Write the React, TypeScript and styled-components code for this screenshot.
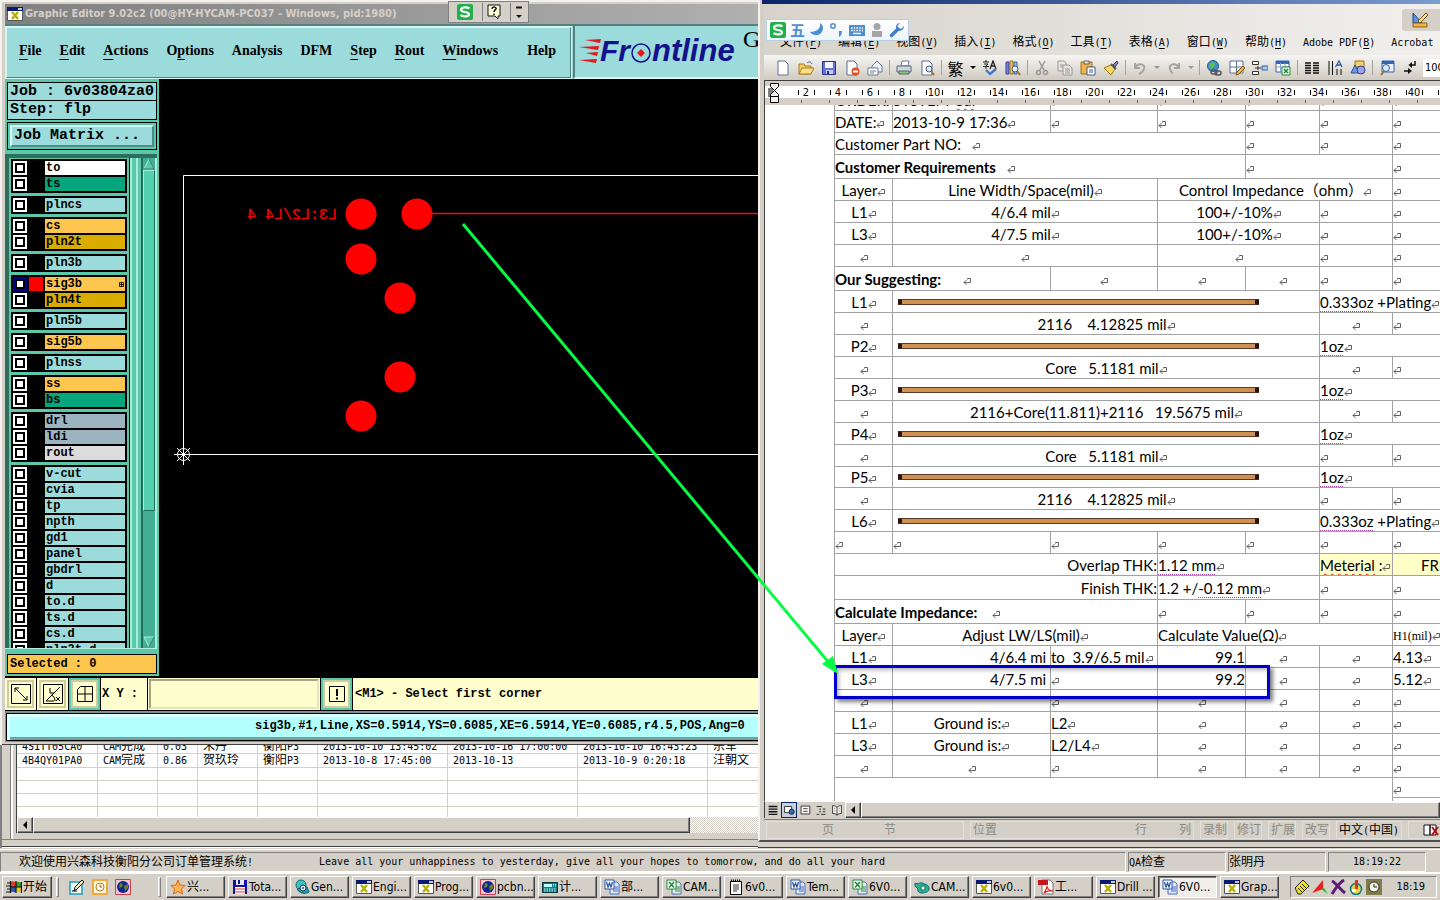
import React, { ReactNode } from "react";
import styled, { createGlobalStyle, css } from "styled-components";

const GREY = "#d4d0c8";
const AQUA = "#9bdbdb";
const MINT = "#5cc8ab";
const CREAM = "#fffecd";
const ORANGE = "#fdc64f";
const UI = `"DejaVu Sans Condensed", "Noto Sans CJK SC", sans-serif`;
const SONG = `"DejaVu Sans Mono", "Noto Sans CJK SC", monospace`;
const COURIER = `"Liberation Mono", monospace`;
const DOC = `Lato, "Noto Sans CJK SC", sans-serif`;

const Global = createGlobalStyle`
  *, *::before, *::after { box-sizing: border-box; }
  body { margin: 0; overflow: hidden; background: ${GREY}; }
  button, input { font: inherit; color: inherit; margin: 0; padding: 0; border: 0; border-radius: 0; background: none; }
  svg { display: block; flex: none; }
`;

const raised = css`
  border: 1px solid;
  border-color: #fff #404040 #404040 #fff;
  box-shadow: inset -1px -1px 0 #808080;
`;
const sunken = css`
  border: 1px solid;
  border-color: #808080 #fff #fff #808080;
`;

/* ---------- shared text ---------- */

const SongText = styled.span`
  font: 10px/14px ${SONG};
  white-space: pre;
  u {
    text-underline-offset: 2px;
    text-decoration-skip-ink: none;
  }
`;
const Han = styled.span`
  font-size: 12px;
`;

/* Underlines the access key written in brackets, as in "File(F)". */
function withKey(text: string): ReactNode {
  const hit = text.match(/^(.*\()(\w)(\))$/);
  return hit ? <>{hit[1]}<u>{hit[2]}</u>{hit[3]}</> : text;
}

function Song({ children, keyed }: { children: string; keyed?: boolean }) {
  return (
    <SongText>
      {children
        .split(/([\u3000-\uffff]+)/)
        .map((part, i) => (i % 2 ? <Han key={i}>{part}</Han> : <span key={i}>{keyed ? withKey(part) : part}</span>))}
    </SongText>
  );
}

/* ---------- icons ---------- */

function Icon({ name }: { name: string }) {
  return (
    <svg width="16" height="16" viewBox="0 0 16 16" aria-hidden="true">
      {icons[name]}
    </svg>
  );
}

const page = <path d="M3 1h7l3 3v11H3z" fill="#fff" stroke="#5a6f9c" />;
const icons: Record<string, ReactNode> = {
  x: (
    <>
      <path d="M.5 1.5h15v13H.5z" fill="#fff" stroke="#555" />
      <path d="M0 1h16v4H0z" fill="#0a1a70" />
      <path d="M11 2h4v2h-4z" fill="#c8c8c8" />
      <path d="M5 6l6 7M11 6l-6 7" stroke="#b8b000" strokeWidth="2.4" />
    </>
  ),
  star: <path d="M8 1l2 5 5 .5-3.500 3.500 1 5L8 12.500 3.500 15l1-5L1 6.500 6 6z" fill="#ffb054" stroke="#d96c10" />,
  floppy: (
    <>
      <path d="M1 1h14v14H1z" fill="#1212a0" />
      <path d="M4 1h8v5H4z" fill="#e8e8ff" />
      <path d="M6 1h2v4H6z" fill="#1212a0" />
      <path d="M3 8h10v7H3z" fill="#fff" />
      <path d="M3 10h10M3 13h10" stroke="#e03030" />
    </>
  ),
  gear: (
    <>
      <circle cx="7" cy="6" r="5" fill="#3ec3bf" stroke="#0b6f78" />
      <path d="M3 10c2 4 8 6 12 3l-2-5z" fill="#25a09b" stroke="#0a6a66" />
      <circle cx="9" cy="9" r="3" fill="#e6fff8" stroke="#128" />
      <circle cx="9" cy="9" r="1" fill="#00704a" />
    </>
  ),
  globe: (
    <>
      <path d="M.5.5h15v15H.500z" fill="#f3c9cf" stroke="#d33c4a" />
      <circle cx="8" cy="8" r="6" fill="#10288e" />
      <path d="M5 4l3 1-1 3-3 1zM9 7l4-2v4l-3 3z" fill="#6e7f2c" />
    </>
  ),
  calc: (
    <>
      <path d="M.5 3.500h15v10H.5z" fill="#087c88" stroke="#033" />
      <path d="M2 5h8v3H2z" fill="#bff" />
      <path d="M2 10h12M2 12h12M11.500 5v3M13.500 5v3" stroke="#dff" strokeDasharray="1.500 1" />
    </>
  ),
  word: (
    <>
      <path d="M6 3h7l2 2v10H6z" fill="#dfe9fb" stroke="#4a6fb5" />
      <path d="M9 8h5M9 10h5M9 12h5" stroke="#4a6fb5" />
      <path d="M1 1h9v9H1z" fill="#fff" stroke="#2a55a8" />
      <path d="M2.500 3l1.500 5 1.500-4L7 8l1.500-5" fill="none" stroke="#2a55a8" strokeWidth="1.300" />
    </>
  ),
  excel: (
    <>
      <path d="M6 3h7l2 2v10H6z" fill="#dff0df" stroke="#4a6fb5" />
      <path d="M9 8h5M9 10h5M9 12h5" stroke="#3f8a4a" />
      <path d="M1 1h9v9H1z" fill="#fff" stroke="#22863a" />
      <path d="M3 3l5 5.500M8 3L3 8.500" stroke="#1f8a36" strokeWidth="1.600" />
    </>
  ),
  note: (
    <>
      <path d="M2.500 2.500h11v13h-11z" fill="#fff" stroke="#000" />
      <path d="M3 1.500h10" stroke="#000" strokeWidth="2" strokeDasharray="1 1" />
      <path d="M5 6h6M5 8h6M5 10h6M5 12h4" stroke="#333" />
    </>
  ),
  pdf: (
    <>
      <path d="M4 1h8l3 3v11H4z" fill="#fff" stroke="#777" />
      <path d="M0 1h10v5H0z" fill="#c8161d" />
      <path d="M6 14c2-3 3-5 3-7 0 3 3 5 6 5-3-1-6 0-9 2z" fill="none" stroke="#d22" strokeWidth="1.200" />
    </>
  ),
  cam: (
    <>
      <path d="M1 4c3 2 6-2 9 1 3 0 5 2 5 5s-4 4-7 4-5-2-4-4L1 7z" fill="#2bae9f" stroke="#0a6f68" />
      <circle cx="9" cy="9" r="2.200" fill="#ffe" stroke="#063" />
    </>
  ),
  pencil: (
    <>
      <path d="M1 3h12v12H1z" fill="#f4fbff" stroke="#18a0b8" strokeWidth="1.500" />
      <path d="M5 12l1-4 7-7 2 2-7 7z" fill="#ffe9b0" stroke="#111" />
      <path d="M3 12h5" stroke="#000" />
    </>
  ),
  clock: (
    <>
      <path d="M0 0h16v16H0z" fill="#f0a93c" />
      <path d="M2 2h12v12H2z" fill="#fff5dc" />
      <circle cx="8" cy="8" r="4" fill="#fff" stroke="#c97a10" />
      <path d="M8 5.500V8h2" fill="none" stroke="#a05a00" />
    </>
  ),
  flag: (
    <>
      <path d="M5 3c2-2 4 1 5-.5V8C9 9 7 7 5 8z" fill="#e23b1c" />
      <path d="M10 3c2-1 3 1 5 0v5c-2 1-3-1-5 0z" fill="#2f9e2f" />
      <path d="M5 8c2-1 4 1 5 0v5c-1 1-3-1-5 0z" fill="#2353c4" />
      <path d="M10 8c2-1 3 1 5 0v5c-2 1-3-1-5 0z" fill="#f0c419" />
      <path d="M1 4h3M0 7h4M1 10h3M0 13h4M4.500 2v12M10 2v12M15.500 3v11M5 8h10" stroke="#111" strokeWidth="1.200" />
    </>
  ),
  newDoc: page,
  open: (
    <>
      <path d="M1 14V4h5l1 2h6v8z" fill="#f4cf67" stroke="#a87b1c" />
      <path d="M1 14l3-6h12l-3 6z" fill="#ffe08a" stroke="#a87b1c" />
      <path d="M9 3c2-2 4-1 5 1" fill="none" stroke="#355a9c" />
    </>
  ),
  save: (
    <>
      <path d="M1.500 1.500h13v13h-13z" fill="#6a73d8" stroke="#2c318c" />
      <path d="M4 2h8v6H4z" fill="#f4f6ff" />
      <path d="M5 10h7v4H5z" fill="#c6cbe8" />
      <path d="M6 11h2v3H6z" fill="#2c318c" />
    </>
  ),
  permission: (
    <>
      {page}
      <circle cx="11.500" cy="11.500" r="4" fill="#e0502a" />
      <path d="M9 11.500h5" stroke="#fff" strokeWidth="2" />
    </>
  ),
  mail: (
    <>
      <path d="M5 6l5-5 5 5v6H5z" fill="#eef2fa" stroke="#6a7894" />
      <path d="M1 8h10v7H1z" fill="#fff" stroke="#6a7894" />
      <path d="M3 11h6M3 13h4" stroke="#6a7894" />
    </>
  ),
  print: (
    <>
      <path d="M5 6l1-5h7l-1 5z" fill="#fff" stroke="#6a7894" />
      <path d="M1 6h14v6H1z" fill="#cfd6de" stroke="#56657c" />
      <path d="M3 11h10v3H3z" fill="#7fc97a" stroke="#56657c" />
    </>
  ),
  preview: (
    <>
      {page}
      <circle cx="10" cy="9" r="3" fill="#d4ecff" stroke="#4b5c80" />
      <path d="M12 11l3 4" stroke="#a66f2c" strokeWidth="2" />
    </>
  ),
  spell: (
    <>
      <path d="M1 2h6M4 0v2M2 4h4L4 6v3M1 6.500h6" fill="none" stroke="#222" />
      <path d="M8 9l3-8 3 8M9 6h4" fill="none" stroke="#222" strokeWidth="1.300" />
      <path d="M4 10l4 4 6-5" fill="none" stroke="#3a78d0" strokeWidth="2.400" />
    </>
  ),
  research: (
    <>
      <path d="M1 2h3v12H1z" fill="#7a7fd8" stroke="#3b3f96" />
      <path d="M5 1h3v13H5z" fill="#f0c45a" stroke="#96722a" />
      <path d="M9 2h3v12H9z" fill="#8fc0ee" stroke="#3b6696" />
      <circle cx="10" cy="9" r="3" fill="#e4f4ff" stroke="#4b5c80" />
      <path d="M12 11l3 4" stroke="#a66f2c" strokeWidth="2" />
    </>
  ),
  cut: (
    <>
      <path d="M5 1l5 9M11 1L6 10" stroke="#999" strokeWidth="1.500" />
      <circle cx="4.500" cy="12.500" r="2" fill="none" stroke="#999" strokeWidth="1.500" />
      <circle cx="11.500" cy="12.500" r="2" fill="none" stroke="#999" strokeWidth="1.500" />
    </>
  ),
  copy: (
    <>
      <path d="M1 1h6l2 2v8H1z" fill="#e8e6e0" stroke="#999" />
      <path d="M6 5h6l3 3v7H6z" fill="#e8e6e0" stroke="#999" />
      <path d="M8 9h5M8 11h5M8 13h5M3 5h3M3 7h3" stroke="#999" />
    </>
  ),
  paste: (
    <>
      <path d="M1 2h11v12H1z" fill="#f0b440" stroke="#96722a" />
      <path d="M4 1h5v3H4z" fill="#ddd" stroke="#666" />
      <path d="M7 7h8v8H7z" fill="#fff" stroke="#3b5a96" />
      <path d="M9 10h4M9 12h4" stroke="#3b5a96" />
    </>
  ),
  brush: (
    <>
      <path d="M10 5l4-4 1 2-3 4z" fill="#7a7fd8" stroke="#444" />
      <path d="M1 8l7-3 4 4-4 6z" fill="#f8d866" stroke="#a87b1c" />
      <path d="M8 4l5 5" stroke="#555" strokeWidth="2" />
    </>
  ),
  undo: <path d="M3 3v5h5M3 8c3-6 11-4 9 1-1 3-3 4-5 5" fill="none" stroke="#a5a39d" strokeWidth="2" />,
  redo: <path d="M13 3v5H8M13 8C10 2 2 4 4 9c1 3 2 4 3 4" fill="none" stroke="#a5a39d" strokeWidth="2" />,
  link: (
    <>
      <circle cx="7" cy="6" r="5.500" fill="#3f8fd0" stroke="#235a8c" />
      <path d="M4 3l4-1 1 3-3 4-3-2z" fill="#5fbf4f" />
      <rect x="5" y="10" width="6" height="4" rx="2" fill="none" stroke="#556" strokeWidth="1.500" />
      <rect x="9" y="11" width="6" height="4" rx="2" fill="none" stroke="#556" strokeWidth="1.500" />
    </>
  ),
  tables: (
    <>
      <path d="M1 1h13v12H1z" fill="#fff" stroke="#5a6f9c" />
      <path d="M1 7h13M7.500 1v12" stroke="#5a6f9c" />
      <path d="M7 15l1-3 6-6 2 2-6 6z" fill="#f0b440" stroke="#7a5a1c" />
    </>
  ),
  insertTable: (
    <>
      <path d="M.5 1.500h6v3h-6zM.5 11.500h6v3h-6z" fill="#fff" stroke="#333" />
      <path d="M10 6h6v4h-6z" fill="#a7cbf2" stroke="#2d62a8" />
      <path d="M3 8h6M6 6v4" stroke="#333" />
    </>
  ),
  sheet: (
    <>
      <path d="M1 1h13v11H1z" fill="#fff" stroke="#3565b0" />
      <path d="M1 2.500h13" stroke="#3565b0" strokeWidth="3" />
      <path d="M1 7h13M5.500 3v9M10 3v9" stroke="#7f9fd0" />
      <path d="M7 7h8v8H7z" fill="#eaffea" stroke="#22863a" />
      <path d="M9 9l4 4M13 9l-4 4" stroke="#22863a" strokeWidth="1.500" />
    </>
  ),
  columns: <path d="M1 3h6M1 5.500h6M1 8h6M1 10.500h6M1 13h6M9 3h6M9 5.500h6M9 8h6M9 10.500h6M9 13h6" stroke="#111" strokeWidth="1.400" />,
  direction: (
    <>
      <path d="M2 1v14M5.500 1v14M10 9v6M14 9v6" stroke="#111" />
      <path d="M8.500 7L12 1l3 6M10 5h4" fill="none" stroke="#2d62a8" strokeWidth="1.300" />
    </>
  ),
  drawing: (
    <>
      <path d="M5 1h9v6H5z" fill="#f5cf62" stroke="#93701f" />
      <path d="M1 13l4-8 4 8z" fill="#6d9be8" stroke="#274f9c" />
      <circle cx="11" cy="10" r="4" fill="#9aa2e6" stroke="#3b3f96" />
    </>
  ),
  map: (
    <>
      <path d="M3 1h12v11H3z" fill="#eaf3ff" stroke="#3565b0" />
      <path d="M3 2.500h12" stroke="#3565b0" strokeWidth="3" />
      <circle cx="7" cy="8" r="3.500" fill="#d4ecff" stroke="#4b5c80" />
      <path d="M5 11l-3 4" stroke="#a66f2c" strokeWidth="2" />
    </>
  ),
  marks: (
    <>
      <path d="M13 1v4H9M2 11h6" fill="none" stroke="#111" strokeWidth="1.500" />
      <path d="M10 2v6L6.500 5zM6 8v6l4-3z" fill="#111" />
    </>
  ),
  ruler: (
    <>
      <path d="M1 11V1l9 10z" fill="#5b94e0" stroke="#1d3f86" />
      <path d="M1 11h14v4H1z" fill="#f0b440" stroke="#8a641a" />
      <path d="M6 9l8-8 2 2-8 8z" fill="#ffe28a" stroke="#66511c" />
    </>
  ),
  lines: <path d="M3 4h10M3 7h10M3 10h10M3 13h10" stroke="#111" strokeWidth="1.500" />,
  web: (
    <>
      <path d="M3 4h8v7H3z" fill="#fff" stroke="#222" />
      <circle cx="11" cy="10" r="3" fill="#3565b0" stroke="#222" />
    </>
  ),
  printView: (
    <>
      <path d="M3.500 3.500h10v9h-10z" fill="#fff" stroke="#222" />
      <path d="M6 6.500h5M6 9.500h5" stroke="#222" />
    </>
  ),
  outline: <path d="M3 4h6M6 7h2M10 7h3M6 10h2M10 10h3M3 13h3M8 13h5" stroke="#222" />,
  reading: <path d="M8 5v9M8 5C6 3 4 3 3 3v9c2 0 4 0 5 2 1-2 3-2 5-2V3c-1 0-3 0-5 2zM5 6h1M5 9h1M10 6h1M10 9h1" fill="#fff" stroke="#222" />,
  book: (
    <>
      <path d="M1 3h6v10H1zM7 3h6v10H7z" fill="#fff" stroke="#111" />
      <path d="M9 5l6 8M15 5l-6 8" stroke="#b01010" strokeWidth="2" />
    </>
  ),
  sogou: (
    <>
      <rect x="0" y="0" width="16" height="16" rx="2" fill="#22b04a" />
      <path d="M12.500 4.500C10 2.500 4 3 4 6c0 2.500 8 1.500 8 4.200 0 2.800-6 2.800-8.500 1" fill="none" stroke="#fff" strokeWidth="2.200" />
    </>
  ),
  help: (
    <>
      <path d="M2 1h12v11h-2v3l-3-3H2z" fill="#ffffdc" stroke="#111" />
      <path d="M6 5c0-3 5-2 4 0-.5 1-2 1-2 3M8 9.500V11" fill="none" stroke="#111" strokeWidth="1.500" />
    </>
  ),
  drop: (
    <>
      <path d="M5 3.500h6" stroke="#111" strokeWidth="2" />
      <path d="M5 11h6l-3 3z" fill="#111" />
    </>
  ),
  moon: <path d="M11 1c1 5-3 9-10 9 5 6 13 3 13-4 0-2-1-4-3-5z" fill="#4f8fd0" />,
  punct: (
    <>
      <circle cx="4" cy="4" r="2.200" fill="none" stroke="#4f8fd0" strokeWidth="1.500" />
      <path d="M10 9h3c0 3-1 5-3 6z" fill="#4f8fd0" />
    </>
  ),
  keyboard: (
    <>
      <path d="M0 3h16v11H0z" fill="#4f8fd0" />
      <path d="M2 6h12M2 8.500h12" stroke="#fff" strokeWidth="1.400" strokeDasharray="1.500 1.200" />
      <path d="M4 11.500h8" stroke="#fff" strokeWidth="1.400" />
    </>
  ),
  person: (
    <>
      <circle cx="8" cy="4.500" r="3.500" fill="#a5a5a5" />
      <path d="M3 9h10v6H3z" fill="#a5a5a5" />
    </>
  ),
  wrench: (
    <>
      <path d="M2.500 13.500L9 7" stroke="#3f7fc8" strokeWidth="3.500" strokeLinecap="round" />
      <path d="M11 1C7 1 6 5 8 8c3 2 7 0 7-4l-3 3-3-1-.5-2.500z" fill="#3f7fc8" />
    </>
  ),
  tag: (
    <>
      <path d="M1 9l8-8 6 6-8 8H4z" fill="#f2e21c" stroke="#222" />
      <path d="M4 9l4 4M6 7l4 4M8 5l4 4" stroke="#222" />
    </>
  ),
  sail: (
    <>
      <path d="M0 14L11 1v9z" fill="#ee1c1c" />
      <path d="M9 10l3-1 4 6z" fill="#1fb83a" />
    </>
  ),
  cross: <path d="M2 2c4 2 8 8 13 12M14 1C9 4 5 10 2 15" stroke="#5c1a7a" strokeWidth="3" fill="none" />,
  flask: (
    <>
      <circle cx="8" cy="10" r="5.500" fill="#e6d54a" stroke="#0b7c86" strokeWidth="1.500" />
      <path d="M7 1h3v9H7z" fill="#d8362a" />
      <path d="M4 10h4v3H4z" fill="#fff" />
    </>
  ),
  timer: (
    <>
      <path d="M0 0h16v16H0z" fill="#7f7d4a" />
      <circle cx="8" cy="8" r="5" fill="#f4f4e4" stroke="#333" />
      <path d="M8 5v3h3" fill="none" stroke="#222" />
    </>
  ),
};

/* ---------- desktop ---------- */

const Desktop = styled.div`
  position: relative;
  display: flex;
  flex-direction: column;
  height: 100vh;
  background: ${GREY};
  overflow: hidden;
  color: #000;
`;
const Windows = styled.main`
  flex: 1;
  min-height: 0;
  display: grid;
  grid-template-columns: minmax(0, 758fr) minmax(0, 682fr);
`;
const LeftSide = styled.div`
  display: flex;
  flex-direction: column;
  min-height: 0;
`;

/* ---------- graphic editor ---------- */

const Editor = styled.section`
  position: relative;
  flex: 1;
  min-height: 0;
  display: flex;
  flex-direction: column;
  padding: 4px 0 3px 5px;
  background: ${GREY};
  box-shadow: inset 2px 2px 0 #f4f2ee, inset 0 -1px 0 #404040;
  overflow: hidden;
`;
const TitleBar = styled.header`
  flex: none;
  height: 20px;
  display: flex;
  align-items: center;
  gap: 2px;
  padding-left: 2px;
  background: linear-gradient(90deg, #808080, #b0b0b0);
  color: ${GREY};
  font: bold 11px/18px ${UI};
  white-space: nowrap;
`;
const MiniBar = styled.div`
  position: absolute;
  top: 1px;
  left: 448px;
  display: flex;
  align-items: center;
  height: 22px;
  padding-left: 5px;
  background: ${GREY};
  border: 1px solid #808080;
`;
const MiniButton = styled.button`
  width: 28px;
  height: 18px;
  padding-left: 3px;
  & + & {
    border-left: 1px solid #808080;
  }
  &:last-child {
    width: 18px;
    padding-left: 0;
  }
`;
const MenuStrip = styled.div`
  flex: none;
  display: flex;
  height: 55px;
  border-top: 2px solid #54807f;
  background: ${AQUA};
`;
const EditorMenu = styled.nav`
  flex: none;
  width: 567px;
  display: flex;
  align-items: center;
  gap: 18px;
  padding: 0 14px 4px 12px;
  border: 2px solid;
  border-color: #d8f5f5 #54807f #54807f #d8f5f5;
  outline: 1px solid #d8f5f5;
  outline-offset: -1px;
  font: bold 14px/20px "Liberation Serif", serif;
`;
const MenuItem = styled.button<{ $end?: boolean }>`
  margin-left: ${(p) => (p.$end ? "auto" : 0)};
  u {
    text-underline-offset: 4px;
    text-decoration-skip-ink: none;
  }
`;
const Brand = styled.div`
  flex: 1;
  display: flex;
  gap: 2px;
  margin-left: 1px;
  padding: 12px 0 0 4px;
  border-left: 2px solid #54807f;
  border-bottom: 2px solid #d8f5f5;
  overflow: hidden;
  font: 24px/26px "Liberation Serif", serif;
`;
const Product = styled.span`
  margin-top: -12px;
`;

const Body = styled.div`
  flex: 1;
  min-height: 0;
  display: flex;
  background: #000;
`;
const Side = styled.aside`
  width: 154px;
  flex: none;
  display: flex;
  flex-direction: column;
  padding: 3px 2px 2px;
  background: ${MINT};
`;
const JobLine = styled.div`
  height: 19px;
  padding-left: 2px;
  border: 1px solid #000;
  background: ${AQUA};
  font: bold 15px/17px ${COURIER};
  white-space: pre;
  & + & {
    border-top: 0;
  }
`;
const MatrixFrame = styled.div`
  margin-top: 2px;
  padding: 2px;
  border: 1px solid #000;
`;
const MatrixButton = styled.button`
  display: block;
  width: 100%;
  height: 22px;
  padding-left: 2px;
  text-align: left;
  background: ${AQUA};
  border: 2px solid;
  border-color: #d0fbf4 #4d8d88 #4d8d88 #d0fbf4;
  font: bold 15px/18px ${COURIER};
`;
const LayerArea = styled.div`
  flex: 1;
  min-height: 0;
  display: flex;
  margin: 4px 0 5px -2px;
  border-top: 4px solid #2e6e5c;
  border-bottom: 1px solid #b4f0dc;
`;
const LayerList = styled.div`
  width: 128px;
  border-left: 4px solid #2e6e5c;
  border-right: 1px solid #000;
  padding: 1px 2px 0 2px;
  overflow: hidden;
`;
const LayerGroup = styled.div`
  display: flex;
  flex-direction: column;
  gap: 2px;
  padding: 2px;
  margin-bottom: 3px;
  background: #000;
`;
const LayerRow = styled.label`
  display: flex;
  gap: 2px;
  height: 14px;
`;
const LayerTick = styled.input<{ $on?: boolean }>`
  appearance: none;
  width: 14px;
  height: 14px;
  background: #fff;
  box-shadow: inset 0 0 0 2px ${(p) => (p.$on ? "#000090" : "#fff")}, inset 0 0 0 4px #000;
`;
const Swatch = styled.span<{ $on?: boolean }>`
  width: 14px;
  background: ${(p) => (p.$on ? "#f00" : "#000")};
`;
const LayerName = styled.span<{ $tone: string }>`
  flex: 1;
  display: flex;
  align-items: center;
  justify-content: space-between;
  padding: 0 1px 0 1px;
  background: ${(p) => p.$tone};
  font: bold 12px/14px ${COURIER};
`;
const Rail = styled.div`
  width: 8px;
  background: ${MINT};
  border-left: 2px solid #a6efd9;
  border-right: 2px solid #a6efd9;
`;
const LayerScroll = styled.div`
  width: 16px;
  margin-left: 3px;
  display: flex;
  flex-direction: column;
  border-left: 2px solid #1f6e5a;
  border-right: 2px solid #a6efd9;
  background: #44ae96;
`;
const LayerThumb = styled.div`
  flex: 0 0 341px;
  border: 1px solid;
  border-color: #a6efd9 #1f6e5a #1f6e5a #a6efd9;
  background: #54d0b0;
`;
const Spacer = styled.div`
  flex: 1;
`;
const Selected = styled.div`
  height: 20px;
  padding-left: 2px;
  border: 1px solid #000;
  background: ${ORANGE};
  font: bold 12px/18px ${COURIER};
`;
const Canvas = styled.svg`
  flex: 1;
  min-width: 0;
  height: 100%;
  margin-left: 1px;
  background: #000;
`;
const CommandBar = styled.div`
  flex: none;
  height: 35px;
  display: flex;
  align-items: stretch;
  gap: 1px;
  padding: 2px 0 1px;
  background: #000;
  font: bold 12px/16px ${COURIER};
`;
const ToolButton = styled.button<{ $on?: boolean }>`
  width: 31px;
  display: grid;
  place-items: center;
  background: ${CREAM};
  border: 2px solid ${(p) => (p.$on ? MINT : CREAM)};
  box-shadow: inset 0 0 0 2px #cfcba0;
`;
const XYLabel = styled.label`
  width: 46px;
  padding-left: 1px;
  background: ${CREAM};
  line-height: 32px;
  white-space: pre;
`;
const XYInput = styled.input`
  width: 172px;
  padding-left: 4px;
  background: ${CREAM};
  border: 3px solid #cfcba0;
  border-color: #a8a488 #e8e4c0 #e8e4c0 #a8a488;
  outline: 1px solid ${CREAM};
  outline-offset: -1px;
`;
const Prompt = styled.div`
  flex: 1;
  padding-left: 2px;
  background: ${CREAM};
  line-height: 32px;
  white-space: nowrap;
`;
const InfoBar = styled.div`
  flex: none;
  height: 31px;
  padding: 2px 0 0 1px;
  background: #7a9494;
`;
const InfoText = styled.div`
  height: 28px;
  padding-left: 248px;
  border: 1px solid #000;
  border-right: 0;
  background: #b3fffd;
  box-shadow: inset 3px 3px 0 #dcffff, inset 0 -3px 0 #6fa4a4;
  font: bold 12px/25px ${COURIER};
  white-space: nowrap;
  overflow: hidden;
`;

const blue = AQUA;
const gold = "#dbac00";
const green = "#05a67c";
const steel = "#9bb4c0";
const layerGroups: [string, string][][] = [
  [["to", "#fff"], ["ts", green]],
  [["plncs", blue]],
  [["cs", ORANGE], ["pln2t", gold]],
  [["pln3b", blue]],
  [["sig3b", ORANGE], ["pln4t", gold]],
  [["pln5b", blue]],
  [["sig5b", ORANGE]],
  [["plnss", blue]],
  [["ss", ORANGE], ["bs", green]],
  [["drl", steel], ["ldi", steel], ["rout", "#dcdcdc"]],
  ["v-cut", "cvia", "tp", "npth", "gd1", "panel", "gbdrl", "d", "to.d", "ts.d", "cs.d", "pln2t.d"].map(
    (n) => [n, blue] as [string, string]
  ),
];

const editorMenu: [string, number][] = [
  ["File", 0], ["Edit", 0], ["Actions", 0], ["Options", 1], ["Analysis", -1],
  ["DFM", -1], ["Step", 0], ["Rout", 0], ["Windows", 0], ["Help", -1],
];

function Logo() {
  return (
    <svg width="162" height="28" viewBox="0 0 162 28" role="img" aria-label="Frontline">
      <path d="M6 2l16-1-1 4zM0 9l20-1-1 4zM7 15l12-1-1 4zM0 22l18-1-1 4z" fill="#e8161c" />
      <text x="21" y="23" fontFamily="Liberation Sans" fontWeight="bold" fontStyle="italic" fontSize="30" fill="#12128c">
        Fr
      </text>
      <circle cx="62" cy="15" r="9" fill="none" stroke="#12128c" strokeWidth="1.500" />
      <path d="M62 11l4 4-4 4-4-4z" fill="#e8161c" />
      <text x="73" y="23" fontFamily="Liberation Sans" fontWeight="bold" fontStyle="italic" fontSize="31" fill="#12128c">
        ntline
      </text>
    </svg>
  );
}

const pads = [[361, 214], [417, 214], [361, 259], [400, 298], [400, 377], [361, 416]];

function GraphicEditor() {
  return (
    <Editor>
      <TitleBar>
        <Icon name="x" />
        <span>Graphic Editor 9.02c2 (00@HY-HYCAM-PC037 - Windows, pid:1980)</span>
      </TitleBar>
      <MiniBar>
        {["sogou", "help", "drop"].map((n) => (
          <MiniButton key={n} aria-label={n}>
            <Icon name={n} />
          </MiniButton>
        ))}
      </MiniBar>
      <MenuStrip>
        <EditorMenu>
          {editorMenu.map(([label, at]) => (
            <MenuItem key={label} $end={label === "Help"}>
              {at < 0 ? label : <>{label.slice(0, at)}<u>{label[at]}</u>{label.slice(at + 1)}</>}
            </MenuItem>
          ))}
        </EditorMenu>
        <Brand>
          <Logo />
          <Product>Genesis</Product>
        </Brand>
      </MenuStrip>
      <Body>
        <Side>
          <JobLine>Job : 6v03804za0</JobLine>
          <JobLine>Step: flp</JobLine>
          <MatrixFrame>
            <MatrixButton>Job Matrix ...</MatrixButton>
          </MatrixFrame>
          <LayerArea>
            <LayerList>
              {layerGroups.map((group, i) => (
                <LayerGroup key={i}>
                  {group.map(([name, tone]) => (
                    <LayerRow key={name}>
                      <LayerTick type="checkbox" $on={name === "sig3b"} />
                      <Swatch $on={name === "sig3b"} />
                      <LayerName $tone={tone}>
                        {name}
                        {name === "sig3b" && (
                          <svg width="5" height="5" viewBox="0 0 5 5" aria-hidden="true">
                            <path d="M.5.5h4v4h-4zM2.500 0v5M0 2.500h5" fill="none" stroke="#000" strokeWidth=".8" />
                          </svg>
                        )}
                      </LayerName>
                    </LayerRow>
                  ))}
                </LayerGroup>
              ))}
            </LayerList>
            <Rail />
            <LayerScroll>
              <svg width="12" height="12" viewBox="0 0 12 12" aria-hidden="true">
                <path d="M6 1l5 10H1z" fill={MINT} stroke="#a6efd9" />
                <path d="M6 1l5 10H1" fill="none" stroke="#1f6e5a" />
              </svg>
              <LayerThumb />
              <Spacer />
              <svg width="12" height="12" viewBox="0 0 12 12" aria-hidden="true">
                <path d="M1 1h10L6 11z" fill={MINT} stroke="#a6efd9" />
                <path d="M11 1L6 11" stroke="#1f6e5a" />
              </svg>
            </LayerScroll>
          </LayerArea>
          <Selected>Selected : 0</Selected>
        </Side>
        <Canvas viewBox="160 79 598 597" preserveAspectRatio="xMinYMin slice">
          <path d="M183.500 454V175.500H1400M174 454.500H1400" fill="none" stroke="#fff" />
          <path d="M183.500 445v20M177 448l13 13M190 448l-13 13" stroke="#fff" />
          <circle cx="183.500" cy="454.500" r="6" fill="none" stroke="#fff" />
          {pads.map(([x, y]) => (
            <circle key={`${x}-${y}`} cx={x} cy={y} r="15.500" fill="#f00" />
          ))}
          <path d="M430 213.500H1400" stroke="#e81010" strokeWidth="1.600" />
          <text transform="translate(337 219) scale(-1 1)" fontFamily="Liberation Mono" fontSize="15" fill="#f00000" stroke="#f00000" strokeWidth=".4" xmlSpace="preserve">
            L3:L2/L4 4
          </text>
        </Canvas>
      </Body>
      <CommandBar>
        <ToolButton aria-label="Zoom area">
          <svg width="20" height="20" viewBox="0 0 20 20">
            <path d="M.5.5h19v19H.5zM4 4l12 12M4 8V4h4M12 16h4v-4" fill="none" stroke="#000" />
          </svg>
        </ToolButton>
        <ToolButton aria-label="Angle">
          <svg width="20" height="20" viewBox="0 0 20 20">
            <path d="M.5.5h19v19H.5zM3 17L17 3M3 17h8M7 4v5h4M8 11c3 1 4 3 4 6M13 13l4 4M17 13l-4 4" fill="none" stroke="#000" />
          </svg>
        </ToolButton>
        <ToolButton $on aria-label="Grid">
          <svg width="16" height="16" viewBox="0 0 16 16">
            <path d="M.5 3.500l3-3h12v15H.5zM.5 8h15M8 .5v15" fill="none" stroke="#000" />
          </svg>
        </ToolButton>
        <XYLabel htmlFor="xy">X Y :</XYLabel>
        <XYInput id="xy" />
        <ToolButton $on aria-label="Warnings">
          <svg width="16" height="16" viewBox="0 0 16 16">
            <path d="M.5.5h15v15H.5z" fill="none" stroke="#000" />
            <path d="M8 3v7M8 11.500v2" stroke="#000" strokeWidth="2" />
          </svg>
        </ToolButton>
        <Prompt>&lt;M1&gt; - Select first corner</Prompt>
      </CommandBar>
      <InfoBar>
        <InfoText>sig3b,#1,Line,XS=0.5914,YS=0.6085,XE=6.5914,YE=0.6085,r4.5,POS,Ang=0</InfoText>
      </InfoBar>
    </Editor>
  );
}

/* ---------- order list ---------- */

const Orders = styled.section`
  flex: none;
  height: 103px;
  padding: 0 0 0 14px;
  background: ${GREY};
  border-left: 2px solid #808080;
  box-shadow: inset 0 -1px 0 #fff, inset 0 -2px 0 #404040, inset 0 -8px 0 ${GREY}, inset 0 -9px 0 #808080,
    inset 8px 0 0 ${GREY}, inset 9px 0 0 #808080, inset 11px 0 0 #fff;
`;
const OrderView = styled.div`
  height: 72px;
  background: #fff;
  border-left: 1px solid #404040;
  overflow: hidden;
`;
const OrderTable = styled.table`
  width: 800px;
  margin: -6px 0 0 -1px;
  table-layout: fixed;
  border-collapse: collapse;
  td {
    height: 13px;
    padding: 0 0 0 5px;
    border: 1px solid #d4d0c8;
    line-height: 12px;
    overflow: hidden;
    white-space: nowrap;
  }
  ${SongText} {
    display: block;
    line-height: 12px;
  }
  ${Han} {
    line-height: 12px;
  }
`;
const OrderScroll = styled.div`
  display: flex;
  height: 16px;
  border-left: 1px solid #404040;
  background: repeating-conic-gradient(#fff 0 25%, ${GREY} 0 50%) 0 0 / 2px 2px;
`;
const ScrollButton = styled.button`
  width: 16px;
  height: 16px;
  display: grid;
  place-items: center;
  background: ${GREY};
  ${raised}
`;
const ScrollThumb = styled.div<{ $grow?: boolean }>`
  width: 657px;
  flex: ${(p) => (p.$grow ? 1 : "none")};
  height: 16px;
  background: ${GREY};
  ${raised}
`;
const ArrowLeft = () => (
  <svg width="4" height="8" viewBox="0 0 4 8" aria-hidden="true">
    <path d="M4 0v8L0 4z" />
  </svg>
);

const orderCols = [81, 60, 40, 60, 60, 130, 130, 130, 110];
const orders = [
  ["4S1TT05CA0", "CAM完成", "0.03", "朱丹", "衡阳P3", "2013-10-10 13:45:02", "2013-10-16 17:00:00", "2013-10-10 16:43:23", "宗军"],
  ["4B4QY01PA0", "CAM完成", "0.86", "贺玖玲", "衡阳P3", "2013-10-8 17:45:00", "2013-10-13", "2013-10-9 0:20:18", "汪朝文"],
  [], [], [], [],
];

function OrderList() {
  return (
    <Orders>
      <OrderView>
        <OrderTable>
          <colgroup>
            {orderCols.map((w, i) => (
              <col key={i} width={w} />
            ))}
          </colgroup>
          <tbody>
            {orders.map((row, i) => (
              <tr key={i}>
                {orderCols.map((_, c) => (
                  <td key={c}>{row[c] && <Song>{row[c]}</Song>}</td>
                ))}
              </tr>
            ))}
          </tbody>
        </OrderTable>
      </OrderView>
      <OrderScroll>
        <ScrollButton aria-label="Scroll left">
          <ArrowLeft />
        </ScrollButton>
        <ScrollThumb />
      </OrderScroll>
    </Orders>
  );
}

/* ---------- word ---------- */

const WordFrame = styled.section`
  position: relative;
  min-height: 0;
  margin-bottom: 6px;
  display: flex;
  flex-direction: column;
  padding-left: 4px;
  background: ${GREY};
  border-left: 2px solid #f4f2ee;
  border-bottom: 2px solid #505050;
  box-shadow: 0 5px 0 ${GREY}, 0 6px 0 #404040;
  overflow: hidden;
`;
const WordTitle = styled.div`
  flex: none;
  height: 4px;
  margin-left: -2px;
  background: linear-gradient(90deg, #0a246a, #7a9ccf);
`;
const WordMenu = styled.nav`
  flex: none;
  height: 51px;
  display: flex;
  align-items: flex-end;
  gap: 16px;
  padding: 0 0 5px 16px;
  background: linear-gradient(90deg, #d6d3cb, #f2f0ee);
  white-space: nowrap;
  overflow: hidden;
`;
const InputBar = styled.div`
  position: absolute;
  top: 19px;
  left: 6px;
  display: flex;
  align-items: center;
  gap: 4px;
  height: 22px;
  padding: 0 3px;
  background: linear-gradient(#fff, #eef5fc);
  border: 1px solid #b9cfe4;
  color: #4f8fd0;
  font: bold 15px/18px "Noto Sans CJK SC", sans-serif;
`;
const SideTools = styled.div`
  position: absolute;
  top: 9px;
  right: 0;
  width: 38px;
  height: 22px;
  display: flex;
  align-items: center;
  padding-left: 10px;
  border-radius: 3px 0 0 3px;
  background: ${GREY};
`;
const WordTools = styled.div`
  flex: none;
  height: 26px;
  display: flex;
  align-items: center;
  padding-left: 4px;
  background: linear-gradient(#f6f5f2, #cfcbc2);
  border-bottom: 1px solid #404040;
  overflow: hidden;
  &::before {
    content: "";
    width: 2px;
    height: 15px;
    margin-right: 3px;
    background: repeating-linear-gradient(#a09c92 0 2px, transparent 2px 4px);
  }
`;
const Tool = styled.button`
  flex: none;
  width: 23px;
  height: 22px;
  display: grid;
  place-items: center;
  font: 16px/20px "Noto Sans CJK SC", sans-serif;
`;
const Drop = styled.button<{ $dim?: boolean }>`
  flex: none;
  width: 11px;
  height: 22px;
  &::before {
    content: "";
    display: block;
    width: 5px;
    margin: 0 3px;
    border: 3px solid transparent;
    border-top-color: ${(p) => (p.$dim ? "#999" : "#000")};
    border-bottom: 0;
  }
`;
const ToolRule = styled.span`
  flex: none;
  width: 1px;
  height: 15px;
  margin: 0 2px 0 3px;
  background: #a6a398;
`;
const ZoomBox = styled.input`
  flex: none;
  width: 50px;
  height: 18px;
  margin-left: 2px;
  padding-left: 2px;
  background: #fff;
  font: 11px/16px ${UI};
`;
const Ruler = styled.div`
  flex: none;
  height: 24px;
  display: flex;
  align-items: center;
  padding: 1px 0 2px 3px;
  background: linear-gradient(90deg, #666 1px, transparent 1px) 8px 19px / 28px 3px repeat-x,
    linear-gradient(${GREY} 5px, #fff 5px 17px, ${GREY} 17px);
  border-left: 1px solid #404040;
  overflow: hidden;
`;
const RulerCell = styled.span`
  flex: none;
  width: 32px;
  display: flex;
  align-items: center;
  justify-content: center;
  font: 11px/12px "DejaVu Sans Condensed", sans-serif;
  span {
    width: 15px;
    text-align: center;
  }
  &::before,
  &::after {
    content: "";
    width: 1px;
    height: 5px;
    background: #000;
  }
`;
const Paper = styled.div`
  flex: 1;
  min-height: 0;
  padding-left: 69px;
  background: #fff;
  border-left: 1px solid #404040;
  overflow: hidden;
`;
const Sheet = styled.div`
  position: relative;
  width: 680px;
`;
const DocTable = styled.table`
  width: 660px;
  margin-top: -17px;
  table-layout: fixed;
  border-collapse: collapse;
  font: 15px/18px ${DOC};
`;
const Cell = styled.td<{ $align?: string; $fill?: boolean; $open?: boolean; $bold?: boolean }>`
  padding: 0;
  border: 1px solid #a2a2a2;
  ${(p) => p.$open && "border-bottom-color: transparent;"}
  text-align: ${(p) => p.$align || "left"};
  background: ${(p) => (p.$fill ? "#ffffc8" : "transparent")};
  font-weight: ${(p) => (p.$bold ? 700 : 400)};
  white-space: pre;
  overflow: hidden;
`;
const Row = styled.tr<{ $h: number }>`
  height: ${(p) => p.$h}px;
`;
const Copper = styled.div`
  width: 361px;
  height: 6px;
  margin-left: 5px;
  border: 1px solid #5a3a28;
  border-left: 4px solid #2a1410;
  border-right: 4px solid #2a1410;
  border-radius: 1px;
  background: #cf9050;
`;
const Hint = styled.span`
  text-decoration: underline dotted #a040a0 1px;
  text-underline-offset: 3px;
`;
const Typo = styled.span`
  text-decoration: underline wavy #d02020 1px;
  text-underline-offset: 2px;
`;
const Small = styled.span`
  font: 12px/18px "Liberation Serif", serif;
`;
const Indent = styled.span`
  padding-left: 28px;
`;
const MarkSvg = styled.svg`
  display: inline-block;
  vertical-align: -1px;
`;
const Mark = () => (
  <MarkSvg width="8" height="8" viewBox="0 0 8 8" aria-hidden="true">
    <path d="M4.500 1.500V.5h3v4H1M3.500 2L1 4.500 3.500 7" fill="none" stroke="#606060" />
  </MarkSvg>
);
const Highlight = styled.div`
  position: absolute;
  top: 577px;
  left: 0;
  width: 436px;
  height: 34px;
  border: 3px solid #0000c8;
  box-shadow: 3px 3px 4px rgba(0, 0, 0, 0.5), inset 2px 2px 4px rgba(0, 0, 0, 0.3);
`;

type C = { n?: number; a?: string; t?: ReactNode; m?: boolean; fill?: boolean; open?: boolean; bold?: boolean };
const L: C = {};
const M: C = { a: "center" };
const mid = (t: ReactNode, n = 1): C => ({ a: "center", t, n });
const left = (t: ReactNode, n = 1): C => ({ t, n });
const right = (t: ReactNode, n = 1): C => ({ a: "right", t, n, m: false });
const head = (t: string, n: number): C => ({ t, n, bold: true });
const bar: C = { n: 4, t: <Copper />, m: false };
const oz = left(<Hint>1oz</Hint>, 2);
const plating = left(<><Hint>0.333oz</Hint> +Plating</>, 2);

const docRows: [number, C[]][] = [
  [22, [left("ORDER:"), { t: <>SYSTEM <Typo>Cui</Typo></>, m: false }, L, L, L, L, L]],
  [22, [left("DATE:"), left("2013-10-9 17:36"), L, L, L, L, L]],
  [22, [left("Customer Part NO:   ", 4), L, L, L]],
  [24, [head("Customer Requirements   ", 4), { n: 2 }, L]],
  [22, [mid("Layer"), mid("Line Width/Space(mil)", 2), mid("Control Impedance（ohm）", 3), L]],
  [22, [mid("L1"), mid("4/6.4 mil", 2), mid("100+/-10%", 2), L, L]],
  [22, [mid("L3"), mid("4/7.5 mil", 2), mid("100+/-10%", 2), L, L]],
  [22, [M, mid("", 2), mid("", 2), L, L]],
  [24, [head("Our Suggesting:      ", 2), M, M, M, L, L]],
  [22, [mid("L1"), bar, plating]],
  [22, [M, mid("2116    4.12825 mil", 4), M, L]],
  [22, [mid("P2"), bar, oz]],
  [22, [M, mid("Core   5.1181 mil", 4), M, L]],
  [22, [mid("P3"), bar, oz]],
  [22, [M, mid("2116+Core(11.811)+2116   19.5675 mil", 4), M, L]],
  [22, [mid("P4"), bar, oz]],
  [22, [M, mid("Core   5.1181 mil", 4), L, L]],
  [21, [mid("P5"), bar, oz]],
  [22, [M, mid("2116    4.12825 mil", 4), L, L]],
  [22, [mid("L6"), bar, plating]],
  [22, [L, L, L, L, L, L, L]],
  [22, [right("Overlap THK:", 3), left(<Hint>1.12 mm</Hint>, 2), { t: <><Typo>Meterial</Typo> :</>, fill: true }, { t: <Indent>FR-4</Indent>, fill: true }]],
  [24, [right("Finish THK:", 3), left(<>1.2 +/<Hint>-0.12 mm</Hint></>, 2), L, L]],
  [24, [head("Calculate Impedance:    ", 3), L, L, L, L]],
  [22, [mid("Layer"), mid("Adjust LW/LS(mil)", 2), left("Calculate Value(Ω)", 3), left(<Small>H1(mil)</Small>)]],
  [22, [mid("L1"), right("4/6.4 mi "), left("to  3.9/6.5 mil"), right("99.1"), M, M, left("4.13")]],
  [22, [mid("L3"), right("4/7.5 mi "), L, right("99.2"), M, M, left("5.12")]],
  [22, [M, { m: false }, L, M, M, M, L]],
  [22, [mid("L1"), mid("Ground is:"), left("L2"), M, M, M, L]],
  [22, [mid("L3"), mid("Ground is:"), left("L2/L4"), M, M, M, L]],
  [22, [M, M, L, M, M, M, L]],
  [20, [{ n: 6, m: false, open: true }, L]],
  [16, [{ n: 6, open: true }, L]],
];
const docCols = [58, 158, 107, 88, 74, 73, 102];

const BottomRow = styled.div`
  flex: none;
  display: flex;
  height: 17px;
  border-left: 1px solid #404040;
  border-top: 1px solid #fff;
`;
const ViewButton = styled.button<{ $on?: boolean }>`
  width: 16px;
  height: 16px;
  display: grid;
  place-items: center;
  border: ${(p) => (p.$on ? "1px solid #0a246a" : "0")};
  background: ${(p) => (p.$on ? "#c8cee0" : "none")};
  svg {
    width: 14px;
    height: 14px;
  }
`;
const WordStatus = styled.footer`
  flex: none;
  height: 21px;
  display: flex;
  gap: 6px;
  margin-top: 1px;
  padding: 1px 0 1px 2px;
  border-top: 1px solid #808080;
  color: #8c8a84;
  overflow: hidden;
`;
const StatusBox = styled.div<{ $w: number; $dark?: boolean }>`
  flex: none;
  width: ${(p) => p.$w}px;
  display: flex;
  justify-content: space-between;
  align-items: center;
  padding: 0 2px;
  border: 1px solid #e2dfd9;
  color: ${(p) => (p.$dark ? "#000" : "inherit")};
`;
const PageSection = styled(StatusBox)`
  justify-content: flex-start;
  gap: 50px;
  padding-left: 55px;
`;
const Coords = styled(StatusBox)`
  gap: 32px;
  & > :nth-child(2) {
    margin-left: auto;
  }
`;

const wordMenu = ["文件(F)", "编辑(E)", "视图(V)", "插入(I)", "格式(O)", "工具(T)", "表格(A)", "窗口(W)", "帮助(H)", "Adobe PDF(B)", "Acrobat 注释"];
const wordTools = [
  "newDoc", "open", "save", "permission", "mail", "|", "print", "preview", "|", "繁", "v", "spell", "research", "|",
  "cut", "copy", "paste", "brush", "|", "undo", "-", "redo", "-", "|", "link", "tables", "insertTable", "sheet", "|",
  "columns", "direction", "drawing", "|", "map", "marks",
];

function WordWindow() {
  return (
    <WordFrame>
      <WordTitle />
      <WordMenu>
        {wordMenu.map((m) => (
          <button key={m}>
            <Song keyed>{m}</Song>
          </button>
        ))}
      </WordMenu>
      <InputBar>
        <Icon name="sogou" />
        <span>五</span>
        {["moon", "punct", "keyboard", "person", "wrench"].map((n) => (
          <Icon key={n} name={n} />
        ))}
      </InputBar>
      <SideTools>
        <Icon name="ruler" />
      </SideTools>
      <WordTools>
        {wordTools.map((t, i) => {
          if (t === "|") return <ToolRule key={i} />;
          if (t === "v" || t === "-") return <Drop key={i} $dim={t === "-"} aria-label="More" />;
          return (
            <Tool key={i} aria-label={t}>
              {t === "繁" ? t : <Icon name={t} />}
            </Tool>
          );
        })}
        <ZoomBox aria-label="Zoom" defaultValue="100%" />
      </WordTools>
      <Ruler>
        <svg width="22" height="22" viewBox="0 0 22 22" aria-hidden="true">
          <path d="M0 6h5v9H0z" fill="#808080" />
          <path d="M2.500 1.500h8v3l-8 8v2h8v-2l-8-8zM2.500 14.500h8v6h-8z" fill="#f4f4f0" stroke="#000" />
        </svg>
        {Array.from({ length: 22 }, (_, i) => (
          <RulerCell key={i}>
            <span>{2 + i * 2}</span>
          </RulerCell>
        ))}
      </Ruler>
      <Paper>
        <Sheet>
          <DocTable>
            <colgroup>
              {docCols.map((w, i) => (
                <col key={i} width={w} />
              ))}
            </colgroup>
            <tbody>
              {docRows.map(([h, cells], r) => (
                <Row key={r} $h={h}>
                  {cells.map((c, i) => (
                    <Cell key={i} colSpan={c.n || 1} $align={c.a} $fill={c.fill} $open={c.open} $bold={c.bold}>
                      {c.t}
                      {c.m !== false && <Mark />}
                    </Cell>
                  ))}
                </Row>
              ))}
            </tbody>
          </DocTable>
          <Highlight />
        </Sheet>
      </Paper>
      <BottomRow>
        {["lines", "web", "printView", "outline", "reading"].map((n) => (
          <ViewButton key={n} $on={n === "web"} aria-label={n}>
            <Icon name={n} />
          </ViewButton>
        ))}
        <ScrollButton aria-label="Scroll left">
          <ArrowLeft />
        </ScrollButton>
        <ScrollThumb $grow />
      </BottomRow>
      <WordStatus>
        <PageSection $w={198}>
          <Song>页</Song>
          <Song>节</Song>
        </PageSection>
        <Coords $w={224}>
          <Song>位置</Song>
          <Song>行</Song>
          <Song>列</Song>
        </Coords>
        {["录制", "修订", "扩展", "改写"].map((t) => (
          <StatusBox key={t} $w={28}>
            <Song>{t}</Song>
          </StatusBox>
        ))}
        <StatusBox $w={66} $dark>
          <Song>中文(中国)</Song>
        </StatusBox>
        <StatusBox $w={34}>
          <Spacer />
          <Icon name="book" />
        </StatusBox>
      </WordStatus>
    </WordFrame>
  );
}

/* ---------- bottom strips ---------- */

const AppStatus = styled.footer`
  flex: none;
  height: 24px;
  display: flex;
  gap: 2px;
  padding: 2px 14px 0 0;
  border-top: 1px solid #fff;
  border-bottom: 1px solid #fff;
  margin-top: 1px;
`;
const AppBox = styled.div<{ $w?: number; $center?: boolean }>`
  flex: ${(p) => (p.$w ? `0 0 ${p.$w}px` : "1")};
  display: flex;
  align-items: center;
  justify-content: ${(p) => (p.$center ? "center" : "flex-start")};
  min-width: 0;
  white-space: nowrap;
  overflow: hidden;
  ${sunken}
`;
const Greeting = styled(AppBox)`
  gap: 66px;
  padding-left: 18px;
`;
const Taskbar = styled.nav`
  flex: none;
  height: 27px;
  display: flex;
  align-items: center;
  gap: 3px;
  padding: 0 3px 0 2px;
  border-top: 1px solid #fff;
  font: 12px/16px ${UI};
`;
const StartButton = styled.button`
  width: 50px;
  height: 22px;
  display: flex;
  align-items: center;
  gap: 1px;
  padding-left: 3px;
  background: ${GREY};
  ${raised}
`;
const Grip = styled.span`
  width: 3px;
  height: 20px;
  margin: 0 2px 0 1px;
  ${raised}
  box-shadow: none;
  border-color: #fff #808080 #808080 #fff;
`;
const Launch = styled.div`
  display: flex;
  gap: 7px;
  width: 90px;
  padding-left: 5px;
`;
const Task = styled.button<{ $on?: boolean }>`
  flex: 0 1 59px;
  min-width: 0;
  height: 22px;
  display: flex;
  align-items: center;
  gap: 1px;
  padding-left: 3px;
  white-space: nowrap;
  overflow: hidden;
  background: ${GREY};
  ${raised}
  ${(p) =>
    p.$on &&
    css`
      background: #f0eeea;
      border-color: #404040 #fff #fff #404040;
      box-shadow: inset 1px 1px 0 #808080;
    `}
`;
const Tray = styled.div`
  flex: none;
  width: 147px;
  height: 22px;
  margin-left: auto;
  display: flex;
  align-items: center;
  gap: 2px;
  padding: 0 11px 0 3px;
  font-size: 11px;
  ${sunken}
`;
const Clock = styled.time`
  margin-left: auto;
`;
const Annotation = styled.svg`
  position: absolute;
  top: 0;
  left: 0;
  pointer-events: none;
`;

const tasks: [string, string][] = [
  ["star", "兴..."], ["floppy", "Tota..."], ["gear", "Gen..."], ["x", "Engi..."], ["x", "Prog..."], ["globe", "pcbn..."],
  ["calc", "计..."], ["word", "部..."], ["excel", "CAM..."], ["note", "6v0..."], ["word", "Tem..."], ["excel", "6V0..."],
  ["cam", "CAM..."], ["x", "6v0..."], ["pdf", "工..."], ["x", "Drill ..."], ["word", "6V0..."], ["x", "Grap..."],
];

export default function App() {
  return (
    <Desktop>
      <Global />
      <Windows>
        <LeftSide>
          <GraphicEditor />
          <OrderList />
        </LeftSide>
        <WordWindow />
      </Windows>
      <AppStatus>
        <Greeting>
          <Song>欢迎使用兴森科技衡阳分公司订单管理系统!</Song>
          <Song>Leave all your unhappiness to yesterday, give all your hopes to tomorrow, and do all your hard</Song>
        </Greeting>
        <AppBox $w={98}>
          <Song>QA检查</Song>
        </AppBox>
        <AppBox $w={98}>
          <Song>张明丹</Song>
        </AppBox>
        <AppBox $w={98} $center>
          <Song>18:19:22</Song>
        </AppBox>
      </AppStatus>
      <Taskbar>
        <StartButton>
          <Icon name="flag" />
          开始
        </StartButton>
        <Grip />
        <Launch>
          <Icon name="pencil" />
          <Icon name="clock" />
          <Icon name="globe" />
        </Launch>
        <Grip />
        {tasks.map(([icon, label], i) => (
          <Task key={i} $on={i === 16}>
            <Icon name={icon} />
            {label}
          </Task>
        ))}
        <Tray>
          {["tag", "sail", "cross", "flask", "timer"].map((n) => (
            <Icon key={n} name={n} />
          ))}
          <Clock>18:19</Clock>
        </Tray>
      </Taskbar>
      <Annotation width="860" height="700" viewBox="0 0 860 700" aria-hidden="true">
        <path d="M463 224L830 664" stroke="#08fa44" strokeWidth="3" />
        <path d="M838 674l-16-10 11-8z" fill="#08fa44" />
      </Annotation>
    </Desktop>
  );
}
